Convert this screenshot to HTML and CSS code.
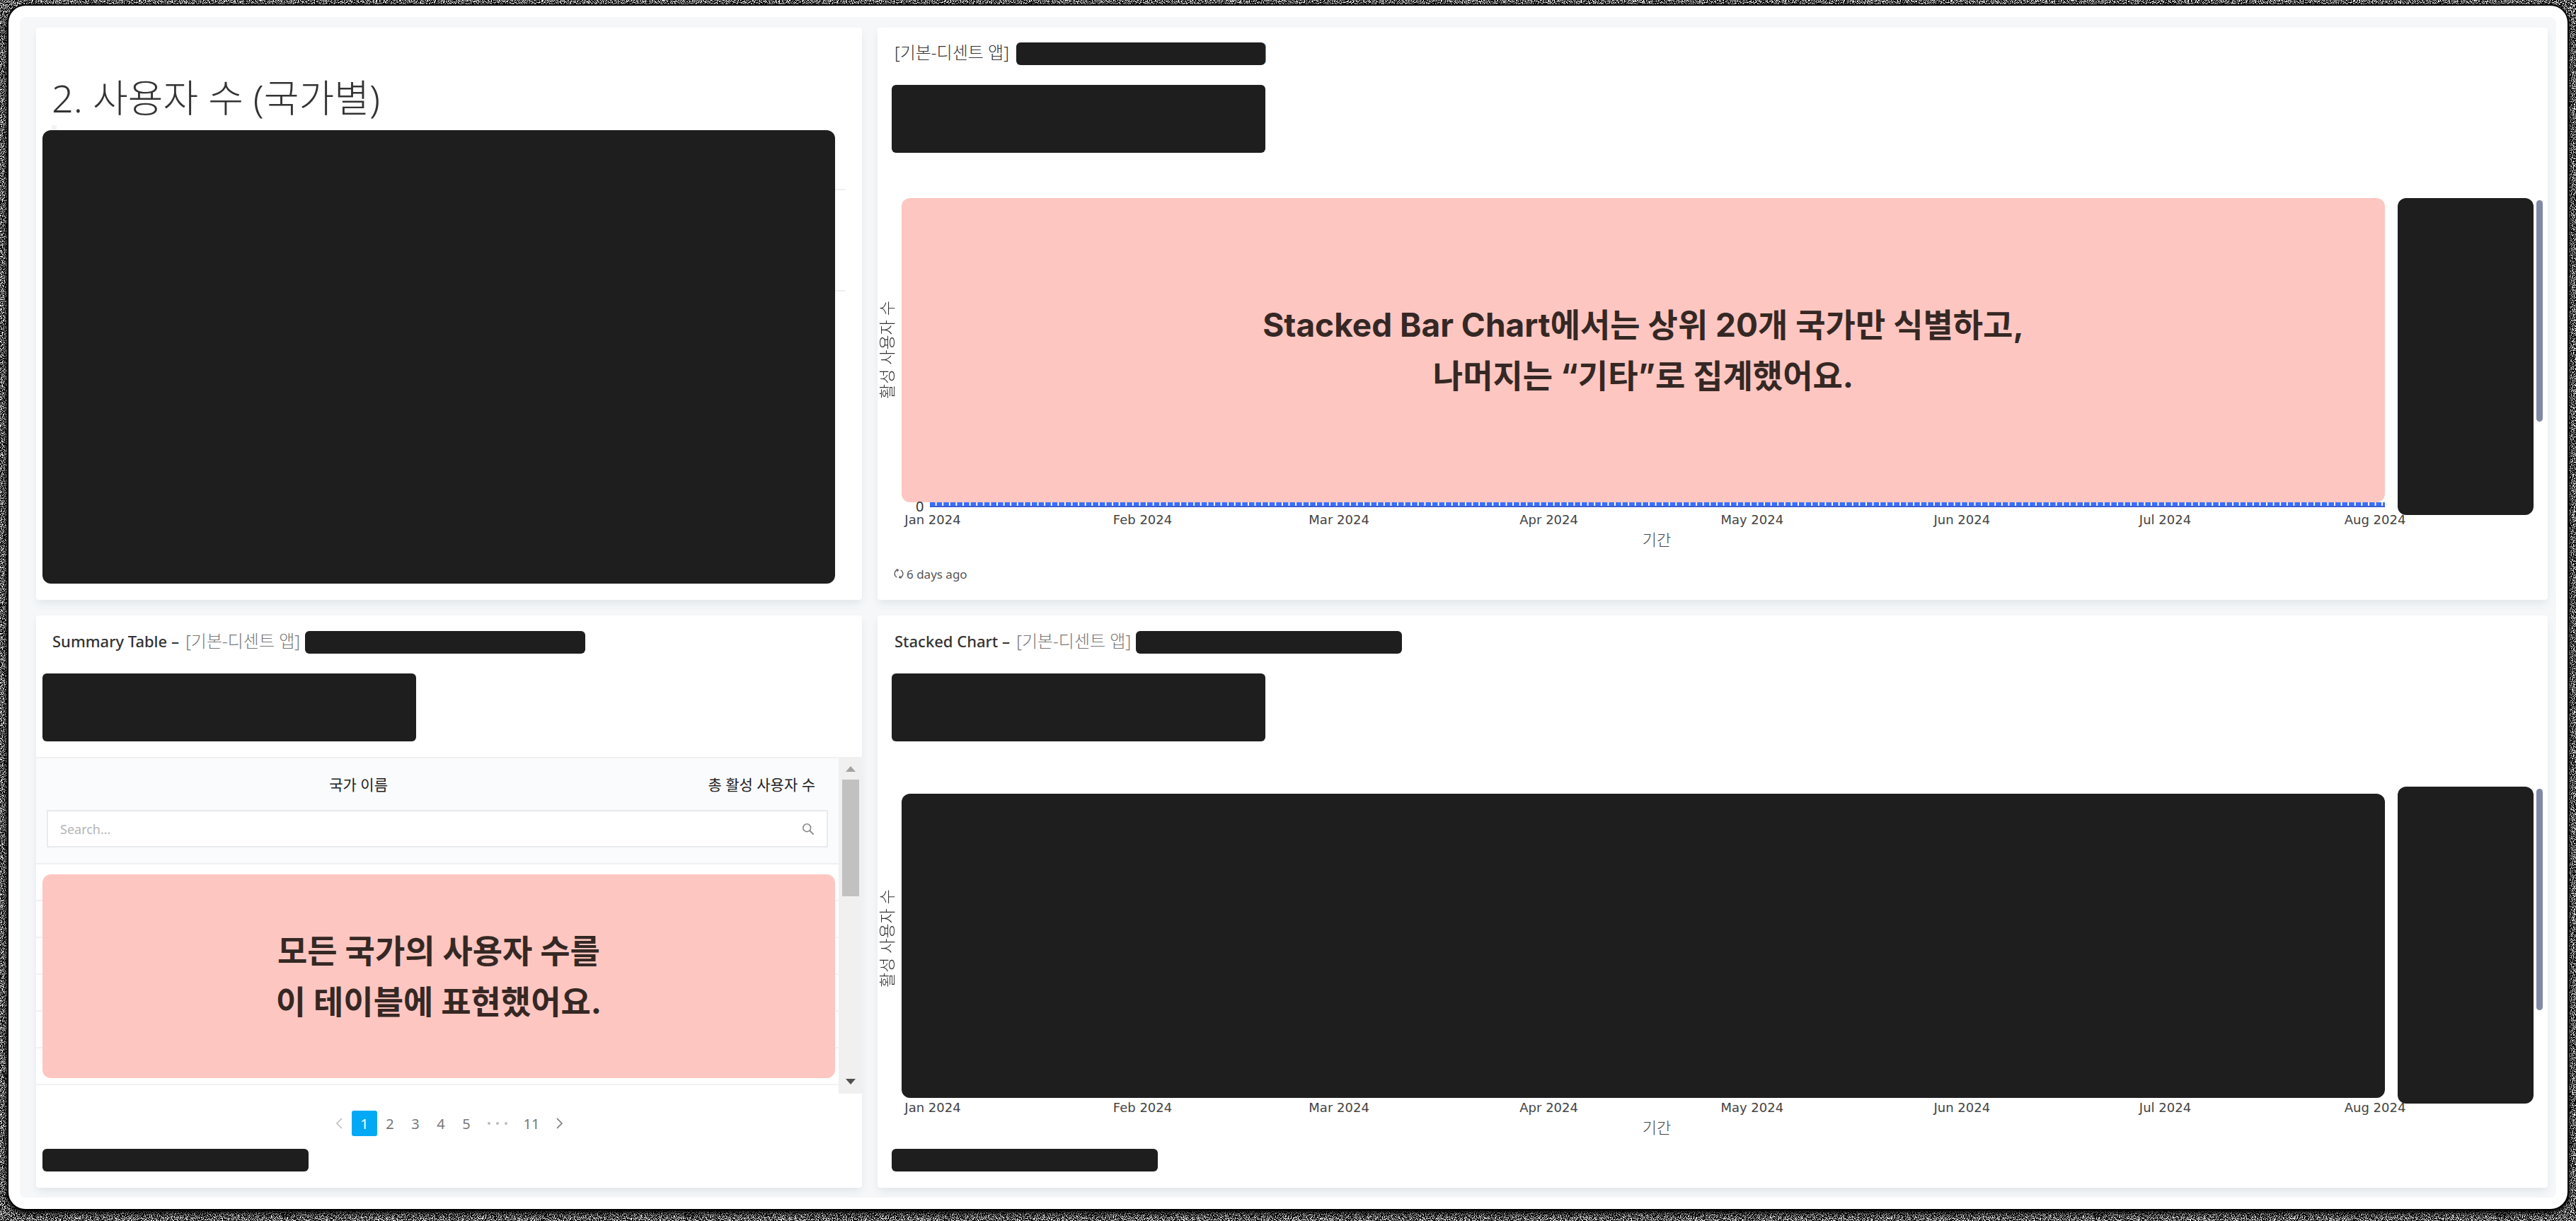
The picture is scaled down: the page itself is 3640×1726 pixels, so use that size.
FILE: index.html
```html
<!DOCTYPE html>
<html lang="ko">
<head>
<meta charset="utf-8">
<title>사용자 수 (국가별)</title>
<link rel="stylesheet" href="styles.css">
</head>
<body>
<svg class="grain" aria-hidden="true">
  <filter id="grain" x="0" y="0" width="100%" height="100%" color-interpolation-filters="sRGB">
    <feTurbulence type="fractalNoise" baseFrequency="0.9" numOctaves="2" seed="4"/>
    <feColorMatrix type="matrix" values="9 0 0 0 -4.4  9 0 0 0 -4.4  9 0 0 0 -4.4  0 0 0 0 1"/>
  </filter>
  <rect width="100%" height="100%" filter="url(#grain)"/>
</svg>
<main class="frame">
  <div class="board">
    <section class="card card-heading">
      <h1 class="heading">2. 사용자 수 (국가별)</h1>
      <div class="redact heading-body"></div>
    </section>

    <section class="card card-chart">
      <h2 class="title"><span>[기본-디센트 앱]</span><span class="redact bar bar-a"></span></h2>
      <div class="redact params"></div>
      <div class="chart">
        <div class="y-title">활성 사용자 수</div>
        <div class="plot">
          <div class="cover note">Stacked Bar Chart에서는 상위 20개 국가만 식별하고,<br>나머지는 “기타”로 집계했어요.</div>
          <div class="base"><span class="zero">0</span><span class="bars"></span></div>
          <svg class="axis" role="img" aria-label="기간">
            <text x="0%" y="20">Jan 2024</text><text x="14.55%" y="20">Feb 2024</text><text x="28.17%" y="20">Mar 2024</text><text x="42.72%" y="20">Apr 2024</text><text x="56.81%" y="20">May 2024</text><text x="71.36%" y="20">Jun 2024</text><text x="85.45%" y="20">Jul 2024</text><text x="100%" y="20">Aug 2024</text>
            <text class="x-title" x="50.2%" y="50">기간</text>
          </svg>
        </div>
        <div class="redact legend"></div>
        <div class="legend-scroll"></div>
      </div>
      <footer class="foot">
        <svg class="refresh" viewBox="0 0 14 16" aria-hidden="true"><path d="M5 2.6A5.6 5.6 0 0 0 4.4 13M9 13.4A5.6 5.6 0 0 0 9.6 3M3.4 1.8 6.2 2.4 5 5M10.6 14.2 7.8 13.6 9 11" fill="none" stroke="currentColor" stroke-width="1.3"/></svg>
        <span>6 days ago</span>
      </footer>
    </section>

    <section class="card card-table">
      <h2 class="title title-named"><span><b>Summary Table –</b> <span class="soft">[기본-디센트 앱]</span></span><span class="redact bar bar-b"></span></h2>
      <div class="redact params"></div>
      <div class="table-wrap">
        <div class="table-main">
          <table class="table">
            <thead>
              <tr><th>국가 이름</th><th>총 활성 사용자 수</th></tr>
              <tr><td class="search-cell" colspan="2">
                <label class="search"><input type="text" placeholder="Search..." aria-label="Search">
                <svg class="lens" viewBox="0 0 20 20" aria-hidden="true"><circle cx="8" cy="8" r="6" fill="none" stroke="currentColor" stroke-width="1.8"/><path d="M12.5 12.5 18.5 18.5" stroke="currentColor" stroke-width="2"/></svg></label>
              </td></tr>
            </thead>
            <tbody>
              <tr><td></td><td></td></tr><tr><td></td><td></td></tr><tr><td></td><td></td></tr>
              <tr><td></td><td></td></tr><tr><td></td><td></td></tr><tr><td></td><td></td></tr>
            </tbody>
          </table>
          <div class="note table-note">모든 국가의 사용자 수를<br>이 테이블에 표현했어요.</div>
        </div>
        <div class="scroll" aria-hidden="true">
          <svg class="arrow" viewBox="0 0 14 8"><path d="M0 8 7 0l7 8z" fill="#a3a3a3"/></svg>
          <span class="thumb"></span>
          <svg class="arrow" viewBox="0 0 14 8"><path d="M0 0h14L7 8z" fill="#505050"/></svg>
        </div>
      </div>
      <nav class="pager" aria-label="페이지">
        <button class="prev" aria-label="이전"><svg viewBox="0 0 10 16"><path d="M9 1 2 8l7 7" fill="none" stroke="currentColor" stroke-width="1.6"/></svg></button>
        <button class="on">1</button><button>2</button><button>3</button><button>4</button><button>5</button>
        <button class="more" aria-label="더 보기"><i></i><i></i><i></i></button>
        <button class="wide">11</button>
        <button class="next" aria-label="다음"><svg viewBox="0 0 10 16"><path d="M1 1l7 7-7 7" fill="none" stroke="currentColor" stroke-width="1.6"/></svg></button>
      </nav>
      <div class="redact stamp"></div>
    </section>

    <section class="card card-chart">
      <h2 class="title title-named"><span><b>Stacked Chart –</b> <span class="soft">[기본-디센트 앱]</span></span><span class="redact bar bar-c"></span></h2>
      <div class="redact params"></div>
      <div class="chart">
        <div class="y-title">활성 사용자 수</div>
        <div class="plot plot-low">
          <div class="redact cover"></div>
          <svg class="axis" role="img" aria-label="기간">
            <text x="0%" y="20">Jan 2024</text><text x="14.55%" y="20">Feb 2024</text><text x="28.17%" y="20">Mar 2024</text><text x="42.72%" y="20">Apr 2024</text><text x="56.81%" y="20">May 2024</text><text x="71.36%" y="20">Jun 2024</text><text x="85.45%" y="20">Jul 2024</text><text x="100%" y="20">Aug 2024</text>
            <text class="x-title" x="50.2%" y="50">기간</text>
          </svg>
        </div>
        <div class="redact legend"></div>
        <div class="legend-scroll"></div>
      </div>
      <div class="redact stamp"></div>
    </section>
  </div>
</main>
</body>
</html>
```
FILE: styles.css
```css
* { box-sizing: border-box; }
body {
  margin: 0;
  min-height: 100vh;
  padding: 8px 12px 17px;
  background: #000;
  color: #333;
  font-family: "Noto Sans", "Noto Sans CJK KR", sans-serif;
  font-size: 20px;
  display: flex;
}
.grain { position: absolute; inset: 0; width: 100%; height: 100%; }
.frame {
  position: relative;
  flex: 1;
  display: flex;
  padding: 16px;
  background: #fff;
  border-radius: 24px;
  box-shadow: 0 0 0 2px #000, 0 3px 6px 3px #000;
}
.board {
  flex: 1;
  display: grid;
  grid-template-columns: 1167fr 2360fr;
  grid-template-rows: 1fr 1fr;
  gap: 22px;
  padding: 15px 12px 14px 23px;
  background: #f5f7f9;
  border-radius: 8px;
}
.card {
  min-width: 0;
  display: flex;
  flex-direction: column;
  background: #fff;
  border-radius: 4px;
  box-shadow: 0 6px 12px -2px rgba(100, 120, 130, .14);
}
.redact { background: #1e1e1e; border-radius: 12px; }

.card-heading { padding: 64px 38px 23px 9px; }
.heading {
  margin: 0 0 11px 13px;
  font-size: 54px;
  line-height: 70px;
  font-weight: 300;
}
.heading-body { position: relative; flex: 1; }
.heading-body::before {
  content: "";
  position: absolute;
  left: 13px;
  top: -7px;
  width: 7px;
  height: 7px;
  background: #f3f3f3;
}
.heading-body::after {
  content: "";
  position: absolute;
  left: 100%;
  top: 83px;
  width: 14px;
  height: 141px;
  border: solid #eee;
  border-width: 2px 0;
}

.title {
  display: flex;
  align-items: center;
  gap: 10px;
  margin: 21px 0 28px 24px;
  height: 32px;
  font-size: 24px;
  line-height: 28px;
  font-weight: 300;
  white-space: nowrap;
}
.title > span:first-child { padding-bottom: 4px; }
.title b { margin-right: 3px; font-size: 22px; font-weight: 500; }
.title-named { margin-top: 22px; gap: 7px; }
.soft { color: #777; }
.bar { height: 32px; border-radius: 6px; }
.bar-a { width: 352px; box-shadow: 2px 0 0 -1px #5aa9e6; }
.bar-b { width: 396px; }
.bar-c { width: 376px; }
.params { width: 528px; height: 96px; margin-left: 20px; border-radius: 6px; }
.card-table .title { margin-left: 23px; }
.card-table .params { margin-left: 9px; }

.chart { flex: 1; display: flex; margin-top: 64px; padding-right: 7px; }
.y-title {
  width: 26px;
  height: 430px;
  margin-right: 8px;
  text-align: center;
  writing-mode: vertical-rl;
  text-orientation: sideways;
  transform: rotate(180deg);
  font-size: 23px;
  font-weight: 300;
  line-height: 26px;
}
.plot { flex: 1; min-width: 0; display: flex; flex-direction: column; }
.plot-low { padding-top: 10px; }
.plot-low .axis { margin-top: 0; }
.cover { height: 430px; border-radius: 12px; }
.note {
  display: flex;
  align-items: center;
  justify-content: center;
  text-align: center;
  background: #fec6c1;
  color: #352824;
  border-radius: 12px;
  font-family: Inter, "Noto Sans CJK KR", sans-serif;
  font-size: 46px;
  line-height: 72px;
  font-weight: 700;
}
.base { display: flex; height: 8px; padding-left: 20px; gap: 8px; }
.zero { width: 12px; line-height: 12px; }
.bars {
  flex: 1;
  height: 7px;
  border-bottom: 2px solid #3a5fd0;
  background: linear-gradient(90deg, #3d6dfb 75%, #fff 75%) 0 0 / calc(100% / 214) 100%;
}
.axis {
  height: 60px;
  margin: 3px 14px 0 44px;
  width: calc(100% - 58px);
  overflow: visible;
  font-family: "DejaVu Sans", "Noto Sans CJK KR", sans-serif;
  font-size: 18px;
  fill: #444;
  text-anchor: middle;
}
.x-title { font-size: 22px; font-weight: 300; }
.legend { width: 192px; height: 448px; margin-left: 18px; }
.legend-scroll { width: 9px; height: 313px; margin: 3px 0 0 4px; border-radius: 5px; background: #808aa6; }

.foot {
  display: flex;
  align-items: center;
  gap: 4px;
  height: 24px;
  margin: 0 0 25px 23px;
  font-size: 17px;
  color: #555;
}
.refresh { width: 14px; height: 16px; }
.stamp { width: 376px; height: 32px; margin: 0 0 23px 20px; border-radius: 6px; }
.card-table .stamp { margin-left: 9px; }

.table-wrap { display: flex; height: 476px; margin-top: 22px; }
.table-main { position: relative; flex: 1; }
.table { width: 100%; border-collapse: separate; border-spacing: 0; table-layout: fixed; }
.table thead { background: #fafbfd; }
.table th {
  height: 75px;
  padding: 0 0 2px;
  border-top: 2px solid #f0f0f0;
  font-size: 21px;
  font-weight: 400;
  color: #222;
  white-space: nowrap;
}
.table th:first-child { width: 80%; padding-left: 4px; text-align: center; }
.table th:last-child { width: 20%; text-align: right; padding-right: 33px; }
.search-cell { height: 75px; padding: 0 15px 22px; border-bottom: 2px solid #eef0f2; }
.search {
  display: flex;
  align-items: center;
  height: 53px;
  padding: 0 17px;
  background: #fff;
  border: 2px solid #e8eaec;
}
.search input { flex: 1; border: 0; padding: 0; outline: 0; background: none; font: 18px "Noto Sans", sans-serif; }
.search input::placeholder { color: #b5b5b5; }
.lens { width: 18px; height: 18px; color: #888; }
.table tbody td { height: 52px; padding: 0; border-bottom: 2px solid #f2f2f2; }
.table-note { position: absolute; inset: 166px 5px 22px 9px; }
.scroll {
  display: flex;
  flex-direction: column;
  align-items: center;
  width: 33px;
  padding: 13px 0;
  background: #f0f0f0;
}
.arrow { width: 14px; height: 8px; }
.thumb { width: 24px; height: 165px; margin: 11px 0 auto; background: #c1c1c1; }

.pager { display: flex; align-items: center; height: 36px; margin: 24px 0 auto 410px; }
.pager button {
  display: flex;
  align-items: center;
  justify-content: center;
  width: 36px;
  height: 36px;
  padding: 0;
  border: 0;
  border-radius: 3px;
  background: none;
  color: #777;
  font: 20px "Noto Sans", sans-serif;
}
.pager .on { background: #03a9f4; color: #fff; }
.pager .more { width: 52px; gap: 8px; }
.pager .more i { width: 4px; height: 4px; border-radius: 50%; background: #bbb; }
.pager .wide { width: 44px; }
.pager svg { width: 10px; height: 18px; }
.pager .prev { color: #bbb; }
```
